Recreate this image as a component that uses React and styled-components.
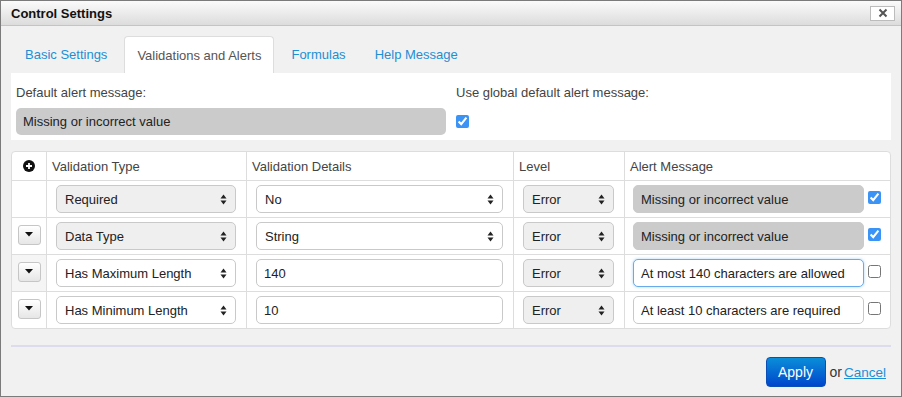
import React from 'react';
import styled, { createGlobalStyle } from 'styled-components';

const GlobalStyle = createGlobalStyle`
  html, body {
    margin: 0;
    padding: 0;
    background: #ffffff;
  }
  body {
    font-family: "Liberation Sans", Arial, sans-serif;
    font-size: 13px;
    color: #333;
  }
  * {
    box-sizing: border-box;
  }
`;

const StyledWindow = styled.div`
  width: 902px;
  height: 397px;
  border: 1px solid #7b7b7b;
  background: #f1f1f1;
  display: flex;
  flex-direction: column;
`;

const StyledTitleBar = styled.div`
  height: 25px;
  flex: none;
  display: flex;
  align-items: center;
  justify-content: space-between;
  padding: 0 6px 0 10px;
  background: linear-gradient(#fbfbfb, #dcdcdc);
  border-bottom: 1px solid #c4c4c4;
`;

const StyledTitle = styled.div`
  font-weight: bold;
  font-size: 13px;
  color: #111;
`;

const StyledClose = styled.button`
  width: 25px;
  height: 15px;
  padding: 0;
  border: 1px solid #bcbcbc;
  background: #ffffff;
  display: flex;
  align-items: center;
  justify-content: center;
`;

const StyledBody = styled.div`
  padding: 10px 10px 0 10px;
  display: flex;
  flex-direction: column;
`;

const StyledTabBar = styled.div`
  display: flex;
  gap: 5px;
  padding-left: 2px;
  height: 37px;
`;

const StyledTab = styled.div`
  padding: 0 12px;
  line-height: ${props => (props.active ? '35px' : '37px')};
  font-size: 13px;
  color: ${props => (props.active ? '#555' : '#1c8fd5')};
  background: ${props => (props.active ? '#ffffff' : 'transparent')};
  border: ${props => (props.active ? '1px solid #dddddd' : 'none')};
  border-bottom: none;
  border-radius: 4px 4px 0 0;
  padding-top: ${props => (props.active ? '1px' : '0')};
`;

const StyledPanel = styled.div`
  background: #ffffff;
  padding: 10px 5px 5px;
  display: grid;
  grid-template-columns: 430px 1fr;
  column-gap: 10px;
`;

const StyledField = styled.div`
  display: flex;
  flex-direction: column;
  gap: 5px;
`;

const StyledLabel = styled.div`
  line-height: 20px;
  color: #444;
`;

const StyledGrayInput = styled.div`
  height: 27px;
  border-radius: 5px;
  background: #cbcbcb;
  padding-left: 7px;
  display: flex;
  align-items: center;
  color: #222;
`;

const StyledCheckRow = styled.div`
  height: 27px;
  display: flex;
  align-items: center;
`;

const StyledCheckbox = styled.input`
  width: 13px;
  height: 13px;
  margin: ${props => props.$margin || '0'};
  accent-color: #3a93f5;
  flex: none;
`;

const StyledTable = styled.div`
  margin-top: 11px;
  border: 1px solid #dddddd;
  border-radius: 4px;
  background: #ffffff;
  overflow: hidden;
`;

const StyledRow = styled.div`
  display: grid;
  grid-template-columns: 34px 200px 267px 111px 1fr;
  height: ${props => (props.header ? '28px' : '37px')};
  border-top: ${props => (props.header ? 'none' : '1px solid #dddddd')};
`;

const StyledCell = styled.div`
  display: flex;
  align-items: center;
  border-left: ${props => (props.first ? 'none' : '1px solid #dddddd')};
  padding: ${props => (props.first ? '0' : '0 10px 0 9px')};
  justify-content: ${props => (props.first ? 'center' : 'flex-start')};
  background: ${props => (props.hover ? '#f5f5f5' : 'transparent')};
`;

const StyledHeadCell = styled.div`
  display: flex;
  align-items: center;
  justify-content: ${props => (props.first ? 'center' : 'flex-start')};
  border-left: ${props => (props.first ? 'none' : '1px solid #dddddd')};
  padding: ${props => (props.first ? '0' : '0 6px 0 5px')};
  color: #444;
`;

const StyledSelect = styled.div`
  width: 100%;
  height: 28px;
  border: 1px solid #c9c9c9;
  border-radius: 5px;
  background: ${props => (props.disabled ? '#efefef' : '#ffffff')};
  padding: 0 8px 0 8px;
  display: flex;
  align-items: center;
  justify-content: space-between;
  color: #222;
`;

const StyledTextInput = styled.div`
  width: 100%;
  height: 28px;
  border: 1px solid ${props => (props.focused ? '#69aaea' : '#c9c9c9')};
  box-shadow: ${props => (props.focused ? '0 0 3px rgba(82, 168, 236, 0.5)' : 'none')};
  border-radius: 5px;
  background: #ffffff;
  padding-left: 7px;
  display: flex;
  align-items: center;
  color: #222;
`;

const StyledAlertInput = styled(StyledTextInput)`
  flex: 1;
  width: auto;
  background: ${props => (props.disabled ? '#cbcbcb' : '#ffffff')};
  border-color: ${props =>
    props.disabled ? '#cbcbcb' : props.focused ? '#69aaea' : '#c9c9c9'};
`;

const StyledAlertCell = styled(StyledCell)`
  padding: 0 9px 0 8px;
`;

const StyledRowButton = styled.button`
  width: 23px;
  height: 20px;
  padding: 0;
  margin-top: -3px;
  border: 1px solid #c6c6c6;
  border-radius: 3px;
  background: linear-gradient(#ffffff, #e6e6e6);
  display: flex;
  align-items: center;
  justify-content: center;
`;

const StyledSeparator = styled.div`
  margin-top: 16px;
  height: 2px;
  background: #dddcee;
`;

const StyledFooter = styled.div`
  margin-top: 10px;
  padding-right: 5px;
  display: flex;
  justify-content: flex-end;
  align-items: center;
`;

const StyledApply = styled.button`
  width: 60px;
  height: 30px;
  border: 1px solid #0a4fb8;
  border-radius: 4px;
  background: linear-gradient(#0a8ed8, #0046cd);
  color: #ffffff;
  font-family: "Liberation Sans", Arial, sans-serif;
  font-size: 14px;
  padding: 0;
`;

const StyledOr = styled.span`
  margin: 0 2px 0 4px;
  font-size: 14px;
  color: #333;
`;

const StyledLink = styled.a`
  font-size: 13.5px;
  color: #1c8fd5;
  text-decoration: underline;
`;

function UpDown() {
  return (
    <svg width="7" height="11" viewBox="0 0 7 11">
      <path d="M3.5 0.5 L6.5 4.5 L0.5 4.5 Z" fill="#222" />
      <path d="M3.5 10.5 L6.5 6.5 L0.5 6.5 Z" fill="#222" />
    </svg>
  );
}

function Caret() {
  return (
    <svg width="8" height="5" viewBox="0 0 8 5">
      <path d="M0 0 L8 0 L4 4.5 Z" fill="#111" />
    </svg>
  );
}

function PlusCircle() {
  return (
    <svg width="12" height="12" viewBox="0 0 12 12">
      <circle cx="6" cy="6" r="6" fill="#111" />
      <path d="M6 3 V9 M3 6 H9" stroke="#fff" strokeWidth="1.8" />
    </svg>
  );
}

function CloseX() {
  return (
    <svg width="10" height="10" viewBox="0 0 10 10">
      <path d="M1.5 1.5 L8.5 8.5 M8.5 1.5 L1.5 8.5" stroke="#555" strokeWidth="2" />
    </svg>
  );
}

function Select({ value, disabled }) {
  return (
    <StyledSelect disabled={disabled}>
      <span>{value}</span>
      <UpDown />
    </StyledSelect>
  );
}

const rows = [
  { type: 'Required', typeLocked: true, detail: 'No', detailSelect: true, alert: 'Missing or incorrect value', alertLocked: true, checked: true, button: false },
  { type: 'Data Type', typeLocked: true, detail: 'String', detailSelect: true, alert: 'Missing or incorrect value', alertLocked: true, checked: true, button: true },
  { type: 'Has Maximum Length', typeLocked: false, detail: '140', detailSelect: false, alert: 'At most 140 characters are allowed', alertLocked: false, checked: false, button: true, focused: true, hover: true },
  { type: 'Has Minimum Length', typeLocked: false, detail: '10', detailSelect: false, alert: 'At least 10 characters are required', alertLocked: false, checked: false, button: true },
];

export default function App() {
  return (
    <>
      <GlobalStyle />
      <StyledWindow>
        <StyledTitleBar>
          <StyledTitle>Control Settings</StyledTitle>
          <StyledClose>
            <CloseX />
          </StyledClose>
        </StyledTitleBar>
        <StyledBody>
          <StyledTabBar>
            <StyledTab>Basic Settings</StyledTab>
            <StyledTab active>Validations and Alerts</StyledTab>
            <StyledTab>Formulas</StyledTab>
            <StyledTab>Help Message</StyledTab>
          </StyledTabBar>
          <StyledPanel>
            <StyledField>
              <StyledLabel>Default alert message:</StyledLabel>
              <StyledGrayInput>Missing or incorrect value</StyledGrayInput>
            </StyledField>
            <StyledField>
              <StyledLabel>Use global default alert message:</StyledLabel>
              <StyledCheckRow>
                <StyledCheckbox type="checkbox" defaultChecked />
              </StyledCheckRow>
            </StyledField>
          </StyledPanel>
          <StyledTable>
            <StyledRow header>
              <StyledHeadCell first>
                <PlusCircle />
              </StyledHeadCell>
              <StyledHeadCell>Validation Type</StyledHeadCell>
              <StyledHeadCell>Validation Details</StyledHeadCell>
              <StyledHeadCell>Level</StyledHeadCell>
              <StyledHeadCell>Alert Message</StyledHeadCell>
            </StyledRow>
            {rows.map(row => (
              <StyledRow key={row.type}>
                <StyledCell first hover={row.hover}>
                  {row.button && (
                    <StyledRowButton>
                      <Caret />
                    </StyledRowButton>
                  )}
                </StyledCell>
                <StyledCell>
                  <Select value={row.type} disabled={row.typeLocked} />
                </StyledCell>
                <StyledCell>
                  {row.detailSelect ? (
                    <Select value={row.detail} />
                  ) : (
                    <StyledTextInput>{row.detail}</StyledTextInput>
                  )}
                </StyledCell>
                <StyledCell>
                  <Select value="Error" disabled />
                </StyledCell>
                <StyledAlertCell>
                  <StyledAlertInput disabled={row.alertLocked} focused={row.focused}>
                    {row.alert}
                  </StyledAlertInput>
                  <StyledCheckbox
                    type="checkbox"
                    defaultChecked={row.checked}
                    $margin="-4px 0 0 4px"
                  />
                </StyledAlertCell>
              </StyledRow>
            ))}
          </StyledTable>
          <StyledSeparator />
          <StyledFooter>
            <StyledApply>Apply</StyledApply>
            <StyledOr>or</StyledOr>
            <StyledLink href="#">Cancel</StyledLink>
          </StyledFooter>
        </StyledBody>
      </StyledWindow>
    </>
  );
}
